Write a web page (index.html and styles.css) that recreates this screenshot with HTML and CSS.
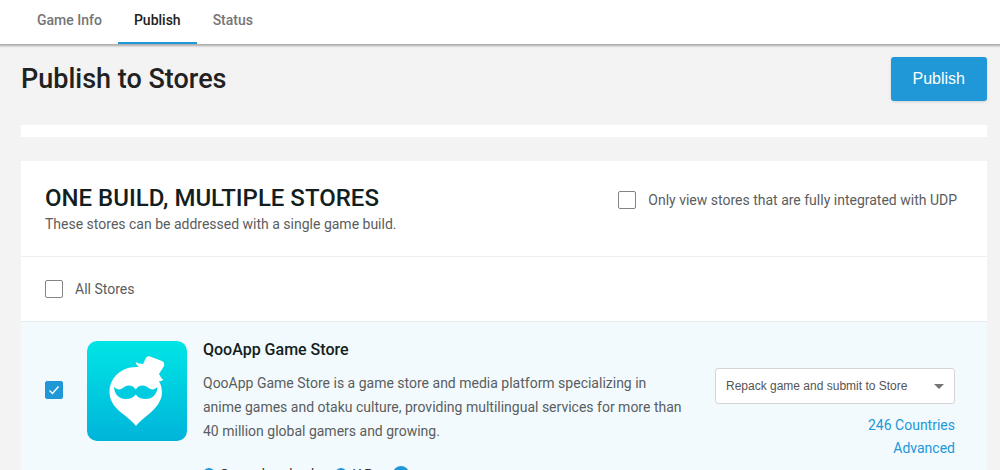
FILE: index.html
```html
<!DOCTYPE html>
<html lang="en">
<head>
<meta charset="utf-8">
<meta name="viewport" content="width=device-width, initial-scale=1">
<title>Publish to Stores</title>
<link rel="stylesheet" href="styles.css">
</head>
<body>
<nav class="tabs" aria-label="Game">
  <a class="tab" href="#info">Game Info</a>
  <a class="tab tab-active" href="#publish" aria-current="page">Publish</a>
  <a class="tab" href="#status">Status</a>
</nav>
<main class="page">
  <header class="page-head">
    <h1 class="page-title">Publish to Stores</h1>
    <button class="publish" type="button">Publish</button>
  </header>
  <section class="panel panel-empty"></section>
  <section class="panel">
    <header class="panel-head">
      <div>
        <h2 class="panel-title">ONE BUILD, MULTIPLE STORES</h2>
        <p class="panel-note">These stores can be addressed with a single game build.</p>
      </div>
      <label class="option"><input class="box" type="checkbox">Only view stores that are fully integrated with UDP</label>
    </header>
    <div class="all-row">
      <label class="option"><input class="box" type="checkbox">All Stores</label>
    </div>
    <article class="store">
      <div class="pick"><input class="box" type="checkbox" aria-label="QooApp Game Store" checked></div>
      <svg class="logo" viewBox="0 0 100 100" aria-hidden="true">
        <defs><linearGradient id="sea" x1="0" y1="0" x2="0" y2="1"><stop offset="0" stop-color="#00e5e5"/><stop offset="1" stop-color="#00b4da"/></linearGradient></defs>
        <rect width="100" height="100" rx="10" fill="url(#sea)"/>
        <path fill="#fff" d="M49 85C46 81 41 77 36 73C28 67 22.500 60 22.500 51C22.500 37 34 26 49 26L52 26Q49 24 48.500 21Q52 23 56 23L59 17Q60 14.500 63 15.500L75 20Q78 21.500 77 25L72 33Q74 37 76.500 39Q74 40.500 72 40Q75 45 75 51C75 60 69 67 62 73C57 77 52 81 49 85Z"/>
        <path fill="#00cce1" d="M27 46Q31 50 35 47.500C38 45.500 39 44.500 42 44.500C45 44.500 47 46 48.700 48.500C50.500 46 52.500 44.500 55.500 44.500C58.500 44.500 59.500 45.500 62.500 47.500Q66.500 50 70.500 46C70 54 65 58 59 58C54 58 51 56.500 48.700 53.500C46.500 56.500 43.500 58 38.500 58C32.500 58 27.500 54 27 46Z"/>
      </svg>
      <div class="details">
        <h3 class="store-name">QooApp Game Store</h3>
        <p class="store-text">QooApp Game Store is a game store and media platform specializing in anime games and otaku culture, providing multilingual services for more than 40 million global gamers and growing.</p>
        <div class="features">
          <span class="feature"><i class="mark"></i>Game download</span>
          <span class="feature"><i class="mark"></i>IAP</span>
          <i class="info"></i>
        </div>
      </div>
      <div class="actions">
        <div class="select-wrap">
          <select class="select" aria-label="Release action"><option>Repack game and submit to Store</option></select>
          <svg class="caret" viewBox="0 0 10 5" aria-hidden="true"><path d="M0 0H10L5 5Z"/></svg>
        </div>
        <a class="link" href="#countries">246 Countries</a>
        <a class="link" href="#advanced">Advanced</a>
      </div>
    </article>
  </section>
</main>
</body>
</html>
```
FILE: styles.css
```css
* { box-sizing: border-box; }
body {
  margin: 0;
  height: 100vh;
  overflow: hidden;
  background: #f3f3f3;
  color: #5a5d5e;
  font: 14px/24px Roboto, sans-serif;
}
h1, h2, h3, p { margin: 0; font-weight: 500; }
.tabs {
  display: flex;
  height: 44px;
  padding-left: 21px;
  background: #fff;
  box-shadow: 0 1px 2px 1px #aaa;
}
.tab {
  padding: 8px 16px;
  color: #757575;
  font-weight: 500;
  text-decoration: none;
}
.tab-active { color: #212121; border-bottom: 2px solid #2097d7; }
.page { padding: 13px 13px 0 21px; }
.page-head {
  display: flex;
  align-items: center;
  justify-content: space-between;
  margin-bottom: 24px;
}
.page-title { color: #212121; font-size: 27px; line-height: 36px; }
.publish {
  height: 44px;
  padding: 0 22px;
  border: 0;
  border-radius: 3px;
  background: #2098d8;
  box-shadow: 0 1px 3px #0002;
  color: #fff;
  font: 16px/24px "Liberation Sans", Arial, sans-serif;
}
.panel { background: #fff; }
.panel-empty { height: 12px; margin-bottom: 24px; }
.panel-head {
  display: flex;
  align-items: flex-start;
  justify-content: space-between;
  padding: 24px 30px 20px 24px;
  border-bottom: 1px solid #eee;
}
.panel-title { color: #121e20; font-size: 24px; line-height: 27px; }
.panel-note { font-weight: 400; }
.option { display: flex; align-items: center; gap: 12px; padding-top: 3px; }
.all-row { padding: 17px 24px 20px; border-bottom: 1px solid #e8eef0; }
.box {
  appearance: none;
  flex: none;
  display: block;
  width: 18px;
  height: 18px;
  margin: 0;
  border: 1px solid #858585;
  border-radius: 2px;
  background: #fff;
}
.box:checked {
  border-color: #2098d8;
  background: #2098d8 url("data:image/svg+xml,%3Csvg xmlns='http://www.w3.org/2000/svg' viewBox='0 0 16 16'%3E%3Cpath d='M3.5 8.5L6.5 11.5L12.5 4.5' fill='none' stroke='white' stroke-width='1.4'/%3E%3C/svg%3E");
}
.store {
  display: flex;
  align-items: flex-start;
  padding: 19px 32px 20px 24px;
  background: #f2fafd;
}
.pick { display: flex; align-items: center; height: 98px; margin-right: 24px; }
.logo { flex: none; width: 100px; height: 100px; margin-right: 16px; }
.details { flex: 1; margin-top: -1px; }
.store-name { color: #121e20; font-size: 16px; line-height: 20px; margin-bottom: 11px; }
.store-text { font-weight: 400; }
.features { display: flex; align-items: center; gap: 21px; margin-top: 19px; font-size: 13px; }
.feature { display: flex; align-items: center; gap: 5px; color: #333; }
.mark { width: 12px; height: 12px; border: 2px solid #2098d8; border-radius: 50%; }
.info { width: 16px; height: 16px; border-radius: 50%; background: #2098d8; }
.actions {
  display: flex;
  flex-direction: column;
  align-items: flex-end;
  flex: none;
  width: 240px;
  margin: 27px 0 0 32px;
}
.select-wrap { position: relative; width: 100%; margin-bottom: 10px; }
.select {
  appearance: none;
  display: block;
  width: 100%;
  height: 36px;
  padding: 0 32px 0 10px;
  border: 1px solid #d5d5d5;
  border-radius: 3px;
  background: #fff;
  color: #555;
  font: 12px/24px "Liberation Sans", Arial, sans-serif;
}
.caret { position: absolute; right: 11px; top: 16px; width: 10px; height: 5px; fill: #757575; }
.link { color: #2098d8; line-height: 23px; text-decoration: none; }
```
